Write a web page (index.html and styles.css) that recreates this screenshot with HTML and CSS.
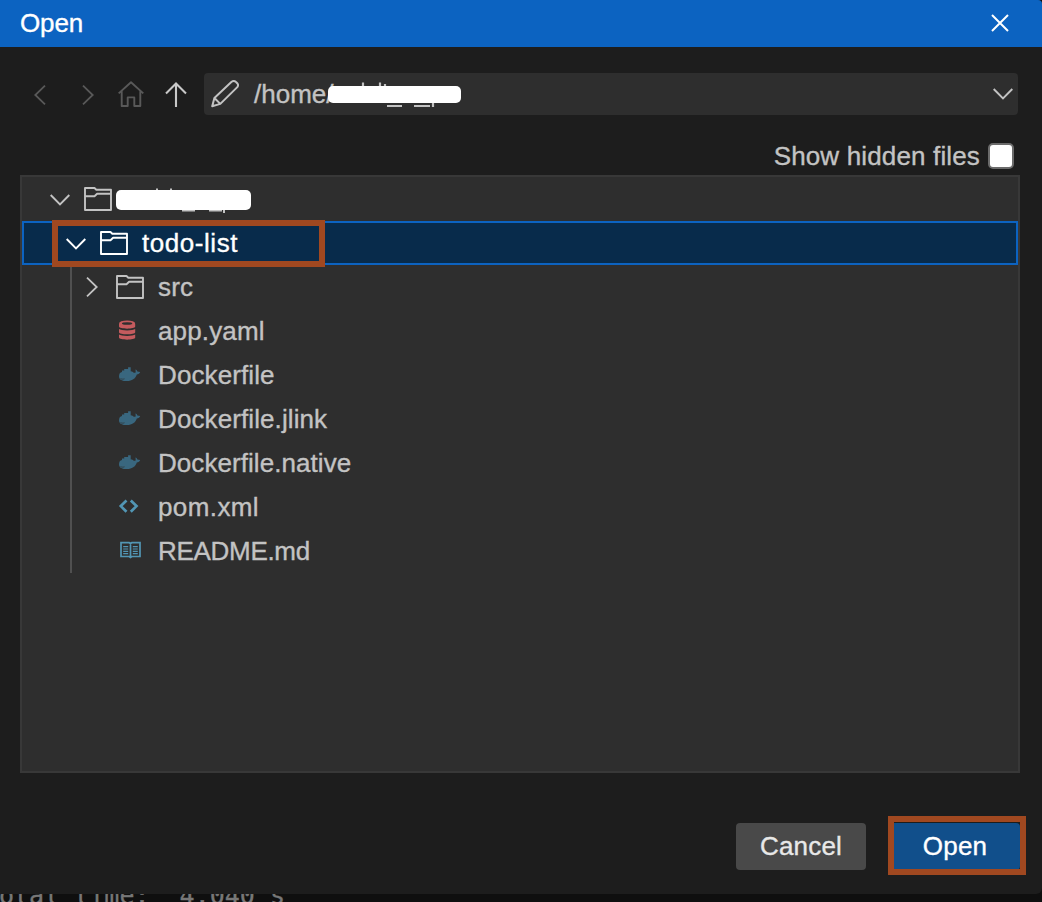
FILE: index.html
```html
<!DOCTYPE html>
<html lang="en">
<head>
<meta charset="utf-8">
<title>Open</title>
<link rel="stylesheet" href="styles.css">
</head>
<body>
<svg class="defs" width="0" height="0">
  <defs>
    <symbol id="folder" viewBox="0 0 28 24"><path d="M1 23V1h9.5l1.8 1.7H27V23zM1 9.3h9.5l2.6-2.5H27" fill="none" stroke="currentColor" stroke-width="1.9" stroke-linejoin="round"/></symbol>
    <symbol id="down" viewBox="0 0 20 12"><path d="M.7 1l9.3 9.4L19.3 1" fill="none" stroke="currentColor" stroke-width="1.9"/></symbol>
    <symbol id="whale" viewBox="0 0 28 24"><path d="M3 13.4c0-2.6 1-4 3-4.4V7.4h2.2V5.9h3.9V4.3h2.6v4c1.5.1 2.4.6 3 1.5h1.7c.4-.8.3-2.2 0-3.4 1.2.3 1.8 1.2 2 2.2.9.1 1.8.1 2.8.4-.5 1.5-1.7 2.3-3.4 2.6-1.3 4.2-4.9 6.5-9.7 6.5C6.3 18.1 3 16.6 3 13.4z" fill="currentColor"/><path d="M4.5 15.6c1.4.7 2.7.7 4 .2" fill="none" stroke="#2e2e2e" stroke-width=".7"/></symbol>
  </defs>
</svg>
<main class="dialog">
  <header class="title-bar">
    <h1 class="title">Open</h1>
    <svg class="close" viewBox="0 0 18 18"><path d="M1 1l16 16M17 1L1 17" fill="none" stroke="currentColor" stroke-width="2"/></svg>
  </header>
  <nav class="nav">
    <svg class="nav-back" viewBox="0 0 12 20"><path d="M11 .7L1.3 10 11 19.3" fill="none" stroke="currentColor" stroke-width="1.8"/></svg>
    <svg class="nav-forward" viewBox="0 0 12 20"><path d="M1 .7l9.7 9.3L1 19.3" fill="none" stroke="currentColor" stroke-width="1.8"/></svg>
    <svg class="nav-home" viewBox="0 0 26 26"><path d="M.7 12.4L13 1.2l12.3 11.2M3.7 10v15h6v-8.6h6.6V25h6V10" fill="none" stroke="currentColor" stroke-width="1.9" stroke-linejoin="round"/></svg>
    <svg class="nav-up" viewBox="0 0 22 25"><path d="M11 25V1.5M1 11.5l10-10 10 10" fill="none" stroke="currentColor" stroke-width="2.1"/></svg>
    <div class="path-box">
      <svg class="pencil" viewBox="0 0 28 28"><path d="M1.2 26.2l2.2-8.2L20.6 1.8q2.2-1.6 4.5.3 3.2 2.4 1.2 5L9.3 23.9zM3.4 18l5.9 5.9" fill="none" stroke="currentColor" stroke-width="2" stroke-linejoin="round"/></svg>
      <span class="path-text">/home/</span>
      <svg class="masked-path" viewBox="0 0 134 30"><path d="M36 3.5v6M53 3.5v6M58 5v3M106 20v8" stroke="#c3c3c3" stroke-width="2.2"/><path d="M60 27h15M87 27h16" stroke="#c3c3c3" stroke-width="2"/><rect x="1" y="7" width="133" height="17" rx="5" fill="#fff"/></svg>
      <svg class="path-arrow"><use href="#down"/></svg>
    </div>
  </nav>
  <label class="hidden-files"><span>Show hidden files</span><input class="check" type="checkbox"></label>
  <section class="tree">
    <div class="row level-0"><span class="twist"><svg class="chevron"><use href="#down"/></svg></span><svg class="icon"><use href="#folder"/></svg>
      <svg class="masked-root" viewBox="0 0 136 30"><path d="M41 3.6v5M55 3.6v5M108 22v6" stroke="#c3c3c3" stroke-width="2"/><path d="M66 25.5h13M93 25.5h13" stroke="#c3c3c3" stroke-width="1.8"/><rect x="0" y="5" width="135" height="20" rx="5" fill="#fff"/></svg></div>
    <div class="row level-1 selected"><span class="twist"><svg class="chevron"><use href="#down"/></svg></span><svg class="icon"><use href="#folder"/></svg><span class="name w-todo">todo-list</span><span class="row-highlight"></span></div>
    <div class="children">
      <div class="row level-2"><span class="twist"><svg class="chevron-right" viewBox="0 0 12 20"><path d="M1 .7l9.7 9.3L1 19.3" fill="none" stroke="currentColor" stroke-width="1.8"/></svg></span><svg class="icon"><use href="#folder"/></svg><span class="name w-src">src</span></div>
      <div class="row level-2 file"><svg class="icon red" viewBox="0 0 28 24"><path d="M3 5v2.6c0 2.7 16.2 2.7 16.2 0V5zM3 10v3.2c0 2.7 16.2 2.7 16.2 0V10c-2 1.9-14.2 1.9-16.2 0zM3 15.6v3c0 2.8 16.2 2.8 16.2 0v-3c-2 1.9-14.2 1.9-16.2 0z" fill="currentColor"/><ellipse cx="11.1" cy="4.4" rx="8.1" ry="2.9" fill="currentColor"/><ellipse cx="11.1" cy="4.5" rx="5.2" ry="1.3" fill="#2e2e2e"/></svg><span class="name w-app">app.yaml</span></div>
      <div class="row level-2 file"><svg class="icon blue"><use href="#whale"/></svg><span class="name w-docker">Dockerfile</span></div>
      <div class="row level-2 file"><svg class="icon blue"><use href="#whale"/></svg><span class="name w-jlink">Dockerfile.jlink</span></div>
      <div class="row level-2 file"><svg class="icon blue"><use href="#whale"/></svg><span class="name w-native">Dockerfile.native</span></div>
      <div class="row level-2 file"><svg class="icon cyan" viewBox="0 0 28 24"><path d="M10.5 5.5L4.8 11.1l5.7 5.6M14.8 5.5l5.7 5.6-5.7 5.6" fill="none" stroke="currentColor" stroke-width="2.7"/></svg><span class="name w-pom">pom.xml</span></div>
      <div class="row level-2 file"><svg class="icon cyan" viewBox="0 0 28 24"><path d="M5 3.7h8.2l1.3.8 1.3-.8H24v13.8h-8.2l-1.3 1-1.3-1H5zM14.5 4.5V19" fill="none" stroke="currentColor" stroke-width="1.7"/><path d="M7.2 7.7h5M7.2 10h5M7.2 12.3h5M7.2 14.6h5M16.8 7.7h5M16.8 10h5M16.8 12.3h5M16.8 14.6h5" stroke="currentColor" stroke-width="1.2"/></svg><span class="name w-readme">README.md</span></div>
    </div>
  </section>
  <footer class="actions">
    <button class="button cancel">Cancel</button>
    <button class="button open">Open<span class="open-highlight"></span></button>
  </footer>
</main>
<div class="terminal"><pre class="output">otal time:  4.040 s</pre></div>
</body>
</html>
```
FILE: styles.css
```css
* { box-sizing: border-box; }
body {
  margin: 0;
  width: 1042px;
  height: 902px;
  overflow: hidden;
  background: #0f0f0f;
  color: #c3c3c3;
  font: 26px/30px "Liberation Sans", Arial, sans-serif;
  -webkit-text-stroke: .35px currentColor;
}
svg { display: block; flex: none; }
.defs { position: absolute; }
.dialog {
  height: 894px;
  background: #1d1d1d;
  border-radius: 0 4px 6px 0;
  overflow: hidden;
}
.title-bar {
  height: 47px;
  padding: 0 33px 2px 20px;
  display: flex;
  align-items: center;
  justify-content: space-between;
  background: #0c63c1;
  color: #fff;
}
.title { margin: 0; font-size: 26px; font-weight: 400; letter-spacing: -.1px; }
.close { width: 18px; height: 18px; }
.nav {
  height: 42px;
  margin: 26px 24px 0 34px;
  display: flex;
  align-items: center;
  color: #595959;
}
.nav-back, .nav-forward { width: 12px; height: 20px; margin-top: 1px; }
.nav-forward { margin-left: 36px; }
.nav-home { width: 26px; height: 26px; margin-left: 24px; }
.nav-up { width: 22px; height: 25px; margin: 1px 0 0 21px; color: #c8c8c8; }
.path-box {
  flex: 1;
  height: 42px;
  margin-left: 17px;
  padding: 0 6px 0 7px;
  display: flex;
  align-items: center;
  background: #2e2e2e;
  border-radius: 4px;
  color: #c3c3c3;
}
.pencil { width: 28px; height: 28px; margin-bottom: 1px; }
.path-text { width: 73px; margin-left: 15px; }
.masked-path { width: 134px; height: 30px; }
.path-arrow { width: 20px; height: 12px; margin-left: auto; margin-right: -1px; }
.hidden-files {
  height: 30px;
  margin: 26px 28px 0 0;
  display: flex;
  justify-content: flex-end;
  align-items: center;
  gap: 8px;
  letter-spacing: .15px;
}
.check {
  appearance: none;
  width: 26px;
  height: 26px;
  margin: 0;
  background: #fff;
  border: 2px solid #6b6b6b;
  border-radius: 5px;
}
.tree {
  height: 598px;
  margin: 4px 22px 0 20px;
  border: 2px solid #383838;
  background: #2e2e2e;
}
.row { height: 44px; display: flex; align-items: center; position: relative; }
.level-0 { padding-left: 22px; }
.level-1 { padding-left: 38px; }
.level-2 { padding-left: 54px; }
.file { padding-left: 94px; }
.selected { background: #082b4b; color: #fff; box-shadow: inset 0 0 0 2px #0c63c1; }
.twist { width: 32px; margin-right: 8px; display: flex; justify-content: center; }
.chevron { width: 20px; height: 12px; margin-top: 2px; }
.chevron-right { width: 12px; height: 20px; }
.icon { width: 28px; height: 24px; }
.name { margin-left: 14px; white-space: nowrap; }
.w-todo { letter-spacing: .55px; }
.w-src { letter-spacing: .2px; }
.w-app { letter-spacing: .15px; }
.w-docker, .w-jlink { letter-spacing: .1px; }
.w-native { letter-spacing: .06px; }
.w-pom { letter-spacing: .4px; }
.w-readme { letter-spacing: -.3px; }
.masked-root { width: 136px; height: 30px; margin: 2px 0 0 4px; }
.children { height: 308px; background: linear-gradient(#505050, #505050) 48px 0 / 2px 308px no-repeat; }
.red { color: #c45b5e; }
.blue { color: #39677f; }
.cyan { color: #5296b4; }
.row-highlight {
  position: absolute;
  left: 30px;
  top: -1px;
  width: 273px;
  height: 47px;
  border: 6px solid #a04820;
  z-index: 1;
}
.actions {
  margin: 50px 22px 0 0;
  display: flex;
  justify-content: flex-end;
  gap: 24px;
}
.button {
  position: relative;
  width: 130px;
  height: 47px;
  padding: 0 0 2px;
  border: 0;
  border-radius: 4px;
  font: inherit;
  letter-spacing: .2px;
}
.cancel { background: #494949; color: #e8e8e8; }
.open { background: #114f8b; color: #fff; }
.open-highlight {
  position: absolute;
  left: -2px;
  top: -7px;
  width: 138px;
  height: 59px;
  border: 6px solid #a04820;
}
.terminal { height: 8px; overflow: hidden; color: #777; }
.output { margin: -13px 0 0 -1px; font: 25px/30px "DejaVu Sans Mono", monospace; }
```
